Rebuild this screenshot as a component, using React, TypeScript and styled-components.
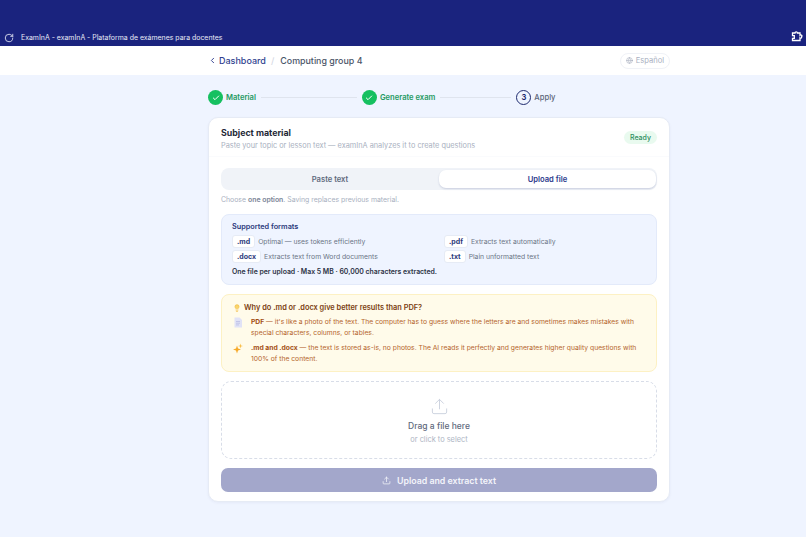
import * as React from 'react';
import styled, { createGlobalStyle } from 'styled-components';
import { Check, ChevronLeft, Globe, Lightbulb, RotateCw, Upload } from 'lucide-react';

const GlobalStyle = createGlobalStyle`
  html, body { margin: 0; padding: 0; }
  body {
    background: #eff4ff;
    font-family: Inter, "Open Sans", "Liberation Sans", sans-serif;
    width: 806px;
    height: 537px;
    overflow: hidden;
  }
  * { box-sizing: border-box; }
`;

const BrowserBar = styled.header`
  height: 46px;
  background: #1a237e;
  color: #fff;
  display: flex;
  align-items: flex-end;
  justify-content: space-between;
  padding: 0 3px 1px 4px;
`;

const BrowserTitle = styled.div`
  display: flex;
  align-items: center;
  gap: 7px;
  font-size: 6.95px;
  line-height: 14px;
  color: #e8eaf6;
`;

const PuzzleIcon = styled.svg`
  width: 12px;
  height: 12px;
  margin-bottom: 3px;
  fill: none;
  stroke: #fff;
  stroke-width: 1.3;
`;

const TopNav = styled.nav`
  height: 29px;
  background: #fff;
  padding-left: 208px;
`;

const NavInner = styled.div`
  width: 462px;
  height: 100%;
  display: flex;
  align-items: center;
  justify-content: space-between;
`;

const Crumbs = styled.div`
  display: flex;
  align-items: center;
  font-size: 9px;
  font-weight: 500;
`;

const BackLink = styled.a`
  display: flex;
  align-items: center;
  gap: 2px;
  color: #303f8f;
`;

const Slash = styled.span`
  color: #d5d9e4;
  margin: 0 6px 0 5px;
`;

const Current = styled.span`
  color: #4a5568;
  font-size: 8.9px;
`;

const LangButton = styled.div`
  width: 50px;
  height: 16px;
  border: 1px solid #f0f2f7;
  border-radius: 8px;
  display: flex;
  align-items: center;
  justify-content: center;
  gap: 3px;
  font-size: 7.6px;
  color: #a9b0bf;
`;

const Main = styled.main`
  width: 462px;
  margin-left: 208px;
`;

const Stepper = styled.ol`
  list-style: none;
  margin: 0;
  padding: 15px 0 0;
  height: 42px;
  display: flex;
  align-items: flex-start;
`;

const Step = styled.li`
  display: flex;
  align-items: center;
  gap: 3px;
  height: 15px;
`;

const DoneDot = styled.span`
  width: 15px;
  height: 15px;
  border-radius: 50%;
  background: #16c060;
  color: #fff;
  display: flex;
  align-items: center;
  justify-content: center;
`;

const NumberDot = styled.span`
  width: 15px;
  height: 15px;
  border-radius: 50%;
  border: 1.4px solid #1e2a6e;
  color: #1e2a6e;
  font-size: 7.5px;
  font-weight: 700;
  display: flex;
  align-items: center;
  justify-content: center;
`;

const StepLabel = styled.span<{ $done?: boolean }>`
  font-size: 7.6px;
  font-weight: ${p => (p.$done ? 600 : 500)};
  color: ${p => (p.$done ? '#1f9a62' : '#5a6478')};
`;

const StepLine = styled.span<{ $w: number }>`
  width: ${p => p.$w}px;
  height: 1px;
  margin: 7px 5px 0;
  background: #dfe4ee;
`;

const Card = styled.section`
  height: 385px;
  background: #fff;
  border: 1px solid #e6ebf5;
  border-radius: 10px;
  box-shadow: 0 1px 3px rgba(30, 42, 110, 0.05);
  padding: 0 12px;
`;

const CardHead = styled.div`
  height: 39px;
  padding: 9px 12px 0;
  margin: 0 -12px;
  border-bottom: 1px solid #fafbfd;
  display: flex;
  align-items: flex-start;
  justify-content: space-between;
`;

const CardTitle = styled.h2`
  margin: 0;
  font-size: 8.8px;
  line-height: 12px;
  font-weight: 700;
  color: #1f2937;
`;

const CardSub = styled.p`
  margin: 1px 0 0;
  font-size: 7.35px;
  line-height: 11px;
  color: #a8b0c0;
`;

const ReadyBadge = styled.span`
  margin-top: 4px;
  height: 13px;
  padding: 0 6px;
  border-radius: 7px;
  background: #e9faef;
  color: #2f8f5f;
  font-size: 7px;
  font-weight: 500;
  line-height: 13px;
`;

const Tabs = styled.div`
  margin-top: 11px;
  height: 22px;
  border-radius: 8px;
  background: #f0f3f8;
  display: grid;
  grid-template-columns: 1fr 1fr;
`;

const Tab = styled.div<{ $active?: boolean }>`
  border-radius: 7px;
  margin: ${p => (p.$active ? '2px 1px 2px 0' : '0')};
  background: ${p => (p.$active ? '#fff' : 'transparent')};
  box-shadow: ${p => (p.$active ? '0 1px 2px rgba(30,42,110,.18)' : 'none')};
  color: ${p => (p.$active ? '#2c3a8c' : '#5f6a7d')};
  font-size: 7.6px;
  font-weight: 600;
  display: flex;
  align-items: center;
  justify-content: center;
`;

const Hint = styled.p`
  margin: 4px 0 0;
  font-size: 6.9px;
  line-height: 11px;
  color: #a8b0c0;
  b {
    color: #7a8496;
    font-weight: 600;
  }
`;

const FormatsBox = styled.div`
  margin-top: 9px;
  height: 71px;
  padding: 7px 10px 0;
  background: #eff4ff;
  border: 1px solid #e3eafa;
  border-radius: 8px;
`;

const BoxTitle = styled.h3`
  margin: 0;
  font-size: 7.3px;
  line-height: 10px;
  font-weight: 600;
  color: #2c3a7c;
`;

const FormatGrid = styled.div`
  margin-top: 3px;
  display: grid;
  grid-template-columns: 212px 1fr;
  row-gap: 2px;
`;

const FormatRow = styled.div`
  display: flex;
  align-items: center;
  gap: 3px;
  height: 13px;
  font-size: 6.8px;
  color: #6b7486;
`;

const Ext = styled.code`
  height: 13px;
  padding: 0 4px;
  background: #fff;
  border: 1px solid #e6ebf5;
  border-radius: 3px;
  font-family: inherit;
  font-size: 7px;
  font-weight: 700;
  line-height: 11px;
  color: #2c3a7c;
`;

const FormatNote = styled.p`
  margin: 3px 0 0;
  font-size: 6.9px;
  line-height: 11px;
  font-weight: 600;
  color: #2b3244;
`;

const WarnBox = styled.div`
  margin-top: 9px;
  height: 78px;
  padding: 7px 19px 0 11px;
  background: #fffbea;
  border: 1px solid #fdf1c4;
  border-radius: 8px;
`;

const WarnTitle = styled.h3`
  margin: 0;
  display: flex;
  align-items: center;
  gap: 3px;
  font-size: 7.4px;
  line-height: 11px;
  font-weight: 600;
  color: #7c3f12;
`;

const WarnRow = styled.div`
  margin-top: 3px;
  display: flex;
  gap: 8px;
  & + & {
    margin-top: 4px;
  }
`;

const WarnIcon = styled.svg`
  width: 10px;
  height: 11px;
  flex: none;
  margin-top: 1px;
`;

const WarnText = styled.p`
  margin: 0;
  font-size: 6.75px;
  line-height: 11px;
  color: #b5652c;
  b {
    color: #a34f14;
    font-weight: 700;
  }
`;

const DropZone = styled.div`
  margin-top: 9px;
  height: 78px;
  border: 1px dashed #d8dde8;
  border-radius: 10px;
  display: flex;
  flex-direction: column;
  align-items: center;
  padding-top: 15px;
  color: #cbd2de;
`;

const DropTitle = styled.div`
  margin-top: 4px;
  font-size: 8.5px;
  line-height: 12px;
  font-weight: 500;
  color: #5f6a7d;
`;

const DropSub = styled.div`
  margin-top: 2px;
  font-size: 7.4px;
  line-height: 11px;
  color: #adb5c4;
`;

const UploadButton = styled.button`
  display: flex;
  width: 100%;
  height: 24px;
  margin-top: 9px;
  border: 0;
  border-radius: 7px;
  background: #a3a7cb;
  color: #f3f4fa;
  font-family: inherit;
  font-size: 8.8px;
  font-weight: 600;
  align-items: center;
  justify-content: center;
  gap: 6px;
`;

export default function App() {
  return (
    <>
      <GlobalStyle />
      <BrowserBar>
        <BrowserTitle>
          <RotateCw size={10} strokeWidth={2} />
          ExamInA - examInA - Plataforma de exámenes para docentes
        </BrowserTitle>
        <PuzzleIcon viewBox="0 0 12 12">
          <path d="M1.500 3H4a1 1 0 0 1 2.400 0h2.600v2.200a1 1 0 0 1 1.500 1.600 1 1 0 0 1-1.500 1.200v2.500H1.500V8.300h1.800V5.700H1.500Z" />
        </PuzzleIcon>
      </BrowserBar>
      <TopNav>
        <NavInner>
          <Crumbs>
            <BackLink>
              <ChevronLeft size={9} strokeWidth={2.5} />
              Dashboard
            </BackLink>
            <Slash>/</Slash>
            <Current>Computing group 4</Current>
          </Crumbs>
          <LangButton>
            <Globe size={7} />
            Español
          </LangButton>
        </NavInner>
      </TopNav>
      <Main>
        <Stepper>
          <Step>
            <DoneDot>
              <Check size={8} strokeWidth={3} />
            </DoneDot>
            <StepLabel $done>Material</StepLabel>
          </Step>
          <StepLine $w={96} />
          <Step>
            <DoneDot>
              <Check size={8} strokeWidth={3} />
            </DoneDot>
            <StepLabel $done>Generate exam</StepLabel>
          </Step>
          <StepLine $w={71} />
          <Step>
            <NumberDot>3</NumberDot>
            <StepLabel>Apply</StepLabel>
          </Step>
        </Stepper>
        <Card>
          <CardHead>
            <div>
              <CardTitle>Subject material</CardTitle>
              <CardSub>Paste your topic or lesson text — examInA analyzes it to create questions</CardSub>
            </div>
            <ReadyBadge>Ready</ReadyBadge>
          </CardHead>
          <Tabs>
            <Tab>Paste text</Tab>
            <Tab $active>Upload file</Tab>
          </Tabs>
          <Hint>
            Choose <b>one option</b>. Saving replaces previous material.
          </Hint>
          <FormatsBox>
            <BoxTitle>Supported formats</BoxTitle>
            <FormatGrid>
              <FormatRow>
                <Ext>.md</Ext>Optimal — uses tokens efficiently
              </FormatRow>
              <FormatRow>
                <Ext>.pdf</Ext>Extracts text automatically
              </FormatRow>
              <FormatRow>
                <Ext>.docx</Ext>Extracts text from Word documents
              </FormatRow>
              <FormatRow>
                <Ext>.txt</Ext>Plain unformatted text
              </FormatRow>
            </FormatGrid>
            <FormatNote>One file per upload · Max 5 MB · 60,000 characters extracted.</FormatNote>
          </FormatsBox>
          <WarnBox>
            <WarnTitle>
              <Lightbulb size={8} color="#f2b632" fill="#f9d56e" />
              Why do .md or .docx give better results than PDF?
            </WarnTitle>
            <WarnRow>
              <WarnIcon viewBox="0 0 10 11">
                <path d="M1.500 0.500h5l2.500 2.500v7.500h-7.500z" fill="#e0e2f6" />
                <path d="M3 4.500h4M3 6.200h4M3 7.900h3" stroke="#b4b8e2" strokeWidth="0.7" />
              </WarnIcon>
              <WarnText>
                <b>PDF</b> — it's like a photo of the text. The computer has to guess where the letters are and
                sometimes makes mistakes with
                <br />
                special characters, columns, or tables.
              </WarnText>
            </WarnRow>
            <WarnRow>
              <WarnIcon viewBox="0 0 10 11">
                <path d="M4 2.500 5 5.500 8 6.500 5 7.500 4 10.500 3 7.500 0 6.500 3 5.500Z" fill="#f7a928" />
                <path d="M7.500 0.500 8.100 2.400 10 3 8.100 3.600 7.500 5.500 6.900 3.600 5 3 6.900 2.400Z" fill="#f9c04d" />
              </WarnIcon>
              <WarnText>
                <b>.md and .docx</b> — the text is stored as-is, no photos. The AI reads it perfectly and generates
                higher quality questions with
                <br />
                100% of the content.
              </WarnText>
            </WarnRow>
          </WarnBox>
          <DropZone>
            <Upload size={19} strokeWidth={1.2} />
            <DropTitle>Drag a file here</DropTitle>
            <DropSub>or click to select</DropSub>
          </DropZone>
          <UploadButton>
            <Upload size={9} />
            Upload and extract text
          </UploadButton>
        </Card>
      </Main>
    </>
  );
}
